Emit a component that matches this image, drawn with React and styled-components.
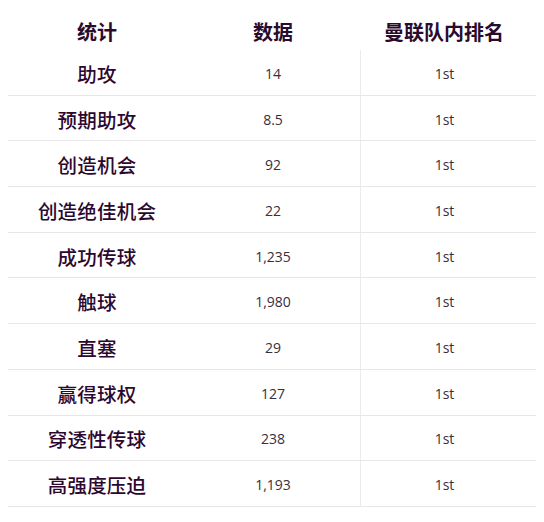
import React from "react"
import styled, { createGlobalStyle } from "styled-components"

const GlobalStyle = createGlobalStyle`
  html, body {
    margin: 0;
    padding: 0;
    background: #ffffff;
  }
  body {
    font-family: "Noto Sans CJK SC", "Noto Sans", sans-serif;
  }
`

const Wrapper = styled.div`
  padding: 0 8px;
`

const Table = styled.div`
  display: grid;
  grid-template-columns: 178px 174px 1fr;
  width: 528px;
`

const HeadCell = styled.div`
  height: 50px;
  display: flex;
  align-items: center;
  justify-content: center;
  padding-top: 13px;
  padding-right: ${(p) => (p.last ? "8px" : "0")};
  box-sizing: border-box;
  font-size: 20px;
  font-weight: 700;
  color: #2a0b2c;
`

const Cell = styled.div`
  height: 45.7px;
  box-sizing: border-box;
  display: flex;
  align-items: center;
  justify-content: center;
  border-bottom: 1px solid #e8e6e8;
  padding-top: 2px;
  padding-right: ${(p) => (p.last ? "8px" : "0")};
  border-left: ${(p) => (p.last ? "1px solid #ecebec" : "none")};
`

const Label = styled.span`
  font-size: 19.5px;
  font-weight: 500;
  color: #2c0830;
  letter-spacing: 0.2px;
`

const Value = styled.span`
  font-family: "Open Sans", "Noto Sans", sans-serif;
  font-size: 14px;
  color: #3a2d3c;
`

const rows = [
  ["助攻", "14"],
  ["预期助攻", "8.5"],
  ["创造机会", "92"],
  ["创造绝佳机会", "22"],
  ["成功传球", "1,235"],
  ["触球", "1,980"],
  ["直塞", "29"],
  ["赢得球权", "127"],
  ["穿透性传球", "238"],
  ["高强度压迫", "1,193"],
]

const App = () => (
  <Wrapper>
    <GlobalStyle />
    <Table>
      <HeadCell>统计</HeadCell>
      <HeadCell>数据</HeadCell>
      <HeadCell last>曼联队内排名</HeadCell>
      {rows.map(([label, value]) => (
        <React.Fragment key={label}>
          <Cell>
            <Label>{label}</Label>
          </Cell>
          <Cell>
            <Value>{value}</Value>
          </Cell>
          <Cell last>
            <Value>1st</Value>
          </Cell>
        </React.Fragment>
      ))}
    </Table>
  </Wrapper>
)

export default App
